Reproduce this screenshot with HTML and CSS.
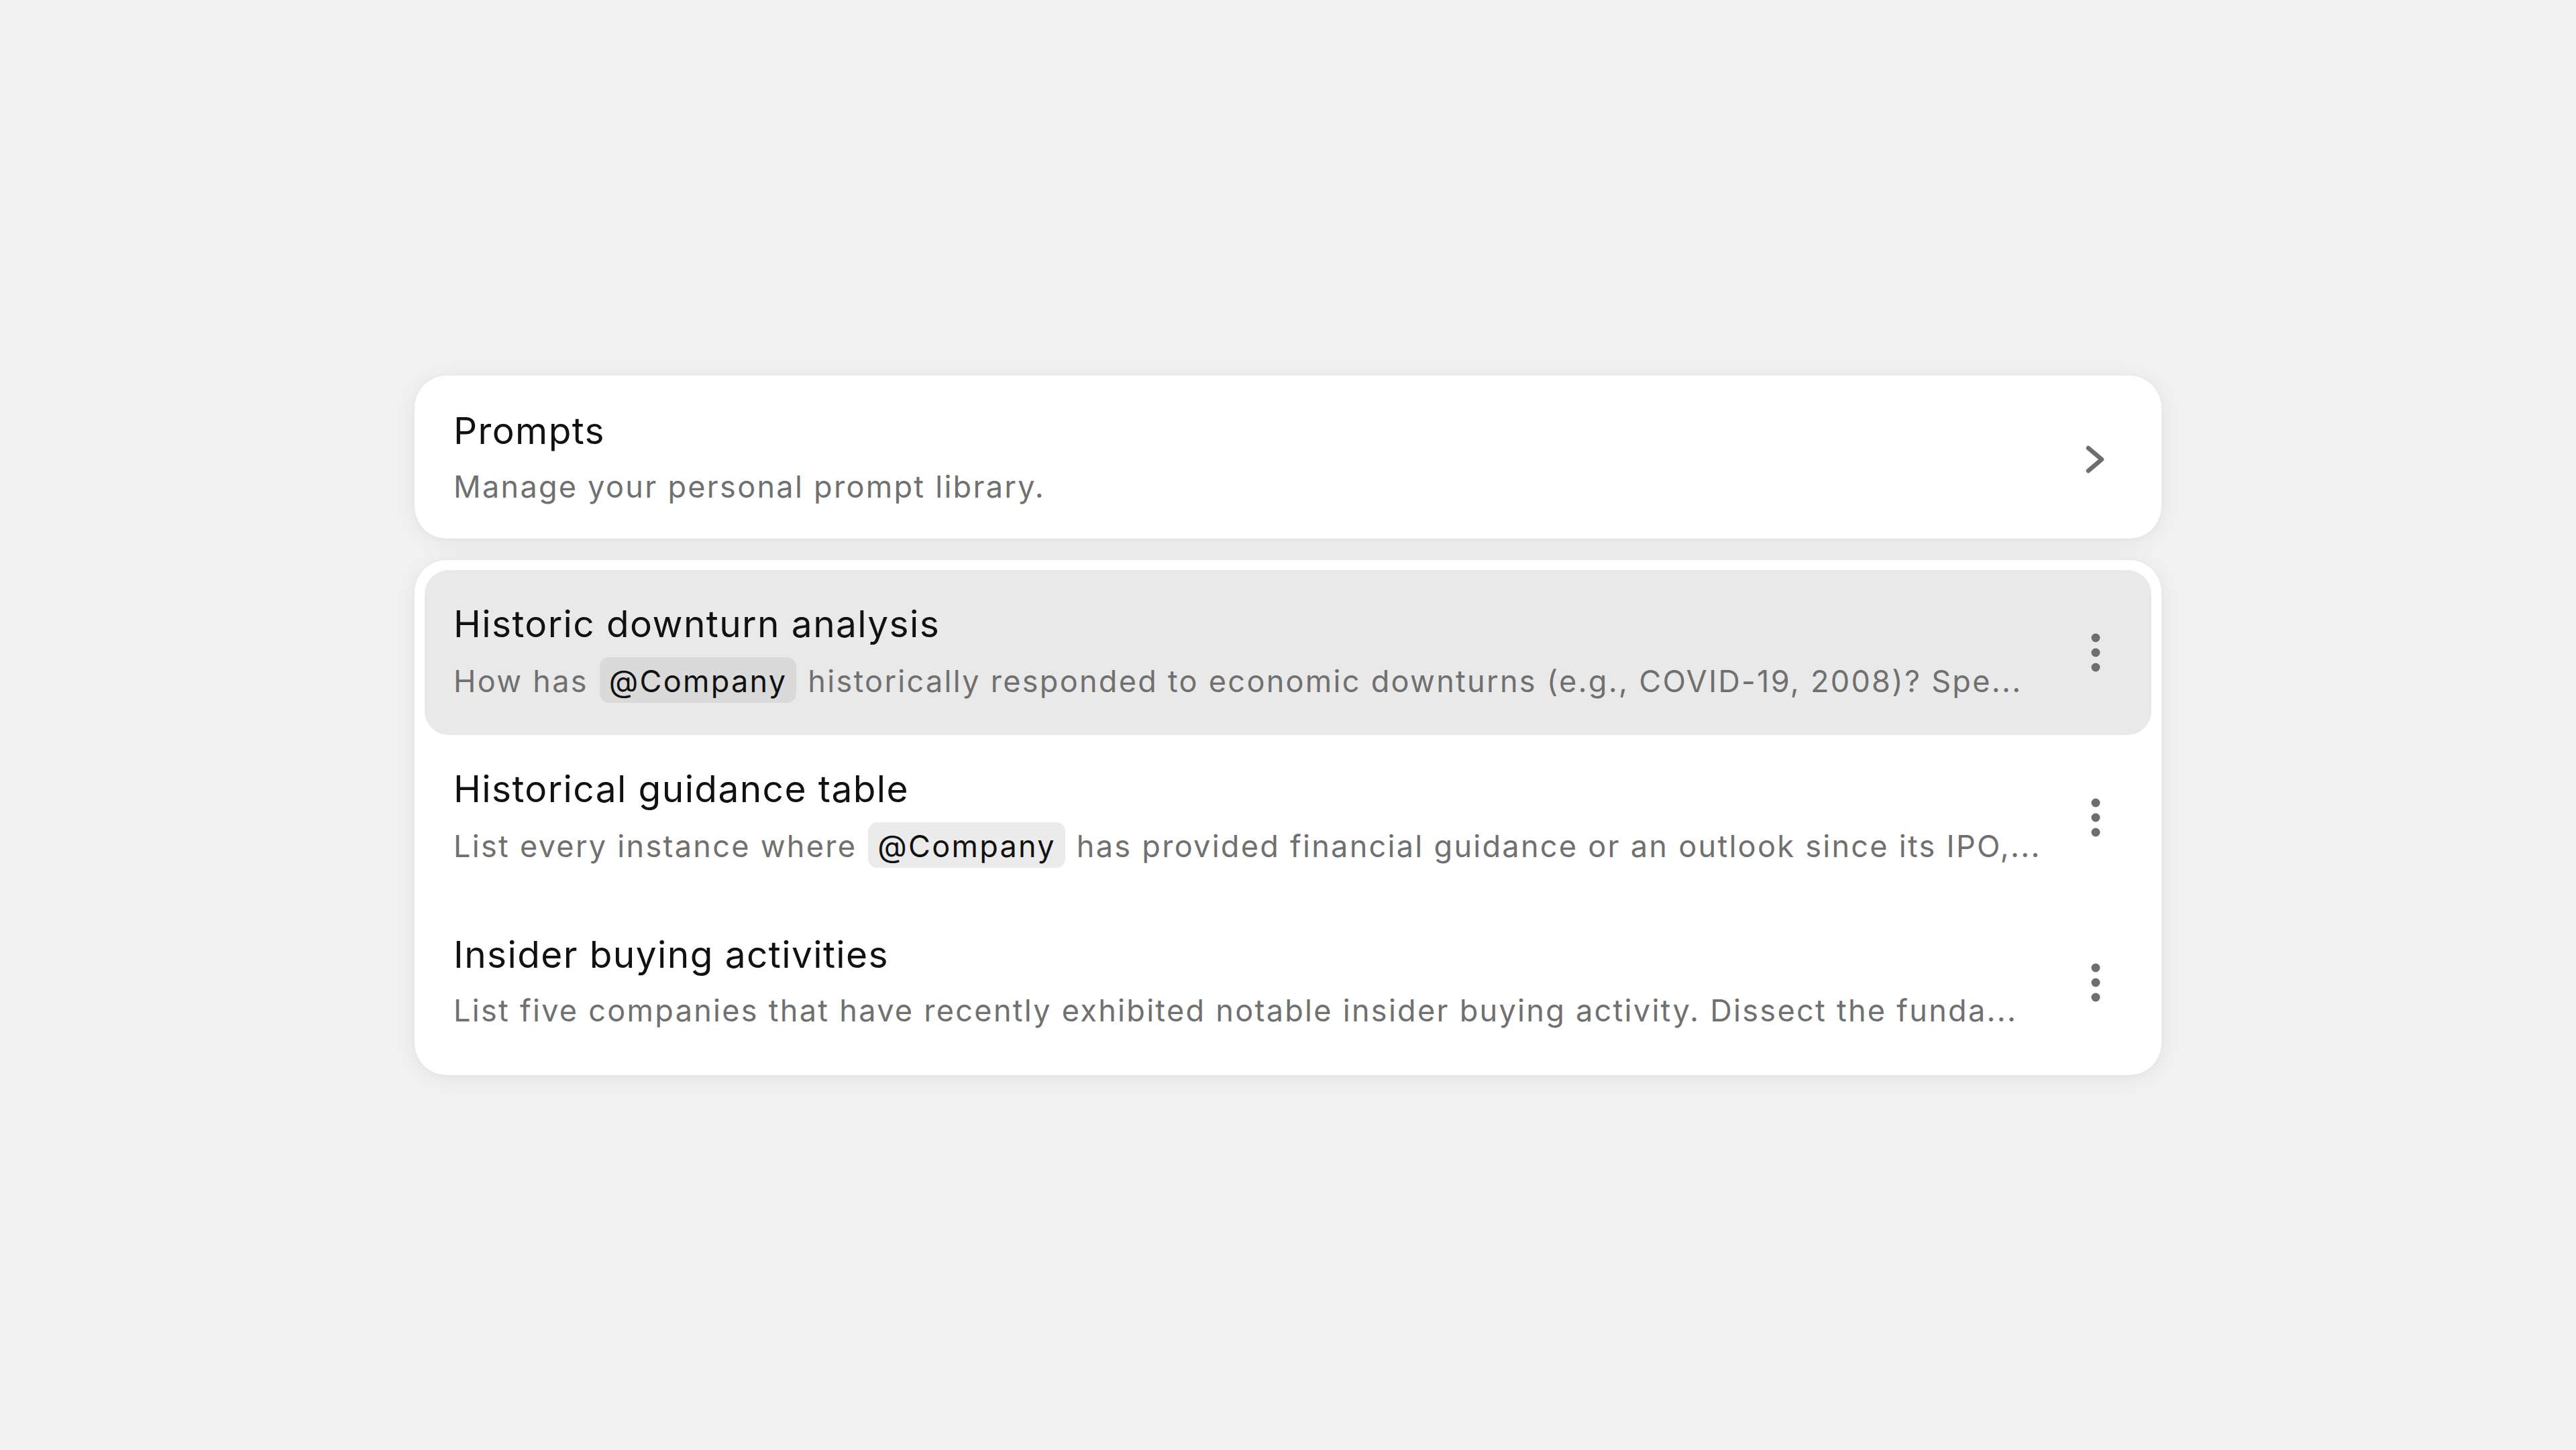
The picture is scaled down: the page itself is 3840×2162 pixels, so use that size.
FILE: index.html
```html
<!DOCTYPE html>
<html>
<head>
<meta charset="utf-8">
<title>Prompts</title>
<link rel="stylesheet" href="styles.css">
</head>
<body>
  <main class="stack">
    <section class="card header">
      <div class="text">
        <h1 class="title">Prompts</h1>
        <p class="desc">Manage your personal prompt library.</p>
      </div>
      <span class="icon">
        <svg viewBox="0 0 60 60" width="60" height="60"><path d="M19 14 L39 31 L19 48" fill="none" stroke="currentColor" stroke-width="6.5" stroke-linecap="round" stroke-linejoin="round"/></svg>
      </span>
    </section>

    <section class="card list">
      <div class="row active">
        <div class="text">
          <h2 class="title">Historic downturn analysis</h2>
          <p class="desc">How has <span class="chip">@Company</span> historically responded to economic downturns (e.g., COVID-19, 2008)? Spe...</p>
        </div>
        <span class="icon">
          <svg viewBox="0 0 60 60" width="60" height="60"><circle cx="30" cy="8" r="6.5"/><circle cx="30" cy="30" r="6.5"/><circle cx="30" cy="52" r="6.5"/></svg>
        </span>
      </div>
      <div class="row">
        <div class="text">
          <h2 class="title">Historical guidance table</h2>
          <p class="desc">List every instance where <span class="chip">@Company</span> has provided financial guidance or an outlook since its IPO,...</p>
        </div>
        <span class="icon">
          <svg viewBox="0 0 60 60" width="60" height="60"><circle cx="30" cy="8" r="6.5"/><circle cx="30" cy="30" r="6.5"/><circle cx="30" cy="52" r="6.5"/></svg>
        </span>
      </div>
      <div class="row">
        <div class="text">
          <h2 class="title">Insider buying activities</h2>
          <p class="desc">List five companies that have recently exhibited notable insider buying activity. Dissect the funda...</p>
        </div>
        <span class="icon">
          <svg viewBox="0 0 60 60" width="60" height="60"><circle cx="30" cy="8" r="6.5"/><circle cx="30" cy="30" r="6.5"/><circle cx="30" cy="52" r="6.5"/></svg>
        </span>
      </div>
    </section>
  </main>
</body>
</html>
```

FILE: styles.css
```css
html, body {
  margin: 0;
  padding: 0;
}

body {
  background: #f2f2f2;
  font-family: 'Inter', 'Noto Sans', sans-serif;
  color: #111;
  min-height: 100vh;
  display: flex;
  align-items: center;
  justify-content: center;
}

h1, h2, p {
  margin: 0;
  font-weight: normal;
}

.stack {
  width: 2604px;
  display: flex;
  flex-direction: column;
  gap: 32px;
}

.card {
  background: #fff;
  border-radius: 48px;
  box-shadow: 0 4px 36px rgba(0, 0, 0, 0.07), 0 1px 6px rgba(0, 0, 0, 0.03);
}

.header {
  display: flex;
  align-items: center;
  padding: 48px 68px 43px 58px;
}

.list {
  padding: 15px;
}

.row {
  display: flex;
  align-items: center;
  height: 246px;
  box-sizing: border-box;
  padding: 0 53px 0 43px;
  border-radius: 36px;
}

.row.active {
  background: #e9e9e9;
}

.text {
  flex: 1;
  min-width: 0;
  margin-right: 48px;
}

.title {
  font-size: 55px;
  line-height: 68px;
  color: #111;
  letter-spacing: 1.4px;
}

.desc {
  margin-top: 16px;
  font-size: 45px;
  line-height: 68px;
  color: #707070;
  letter-spacing: 2.3px;
  white-space: nowrap;
}

.chip {
  display: inline-block;
  padding: 6px 14px 2px;
  margin: 0 2px;
  line-height: 60px;
  border-radius: 14px;
  background: #ebebeb;
  color: #111;
}

.row.active .chip {
  background: #dadada;
}

.icon {
  flex: none;
  width: 60px;
  height: 60px;
  color: #6e6e6e;
  fill: #6e6e6e;
}

.icon svg {
  display: block;
}
```
